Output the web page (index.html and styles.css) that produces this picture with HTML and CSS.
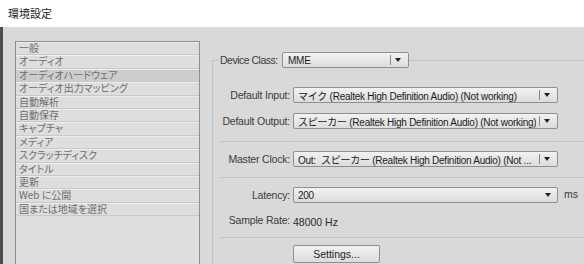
FILE: index.html
```html
<!DOCTYPE html>
<html lang="ja">
<head>
<meta charset="utf-8">
<link rel="stylesheet" href="styles.css">
</head>
<body>
<div class="titlebar">環境設定</div>
<div class="main">
  <ul class="list">
    <li class="item">一般</li>
    <li class="item">オーディオ</li>
    <li class="item selected">オーディオハードウェア</li>
    <li class="item">オーディオ出力マッピング</li>
    <li class="item">自動解析</li>
    <li class="item">自動保存</li>
    <li class="item">キャプチャ</li>
    <li class="item">メディア</li>
    <li class="item">スクラッチディスク</li>
    <li class="item">タイトル</li>
    <li class="item">更新</li>
    <li class="item">Web に公開</li>
    <li class="item">国または地域を選択</li>
  </ul>
  <fieldset class="panel">
    <legend class="legend">
      <span class="label legend-label">Device Class:</span>
      <span class="select select-short"><span class="select-text">MME</span><span class="divider"></span><span class="arrow"></span></span>
    </legend>
    <div class="row row-input">
      <span class="label">Default Input:</span>
      <span class="select"><span class="select-text">マイク (Realtek High Definition Audio) (Not working)</span><span class="divider"></span><span class="arrow"></span></span>
    </div>
    <div class="row row-output">
      <span class="label">Default Output:</span>
      <span class="select"><span class="select-text">スピーカー (Realtek High Definition Audio) (Not working)</span><span class="divider"></span><span class="arrow"></span></span>
    </div>
    <div class="sep sep-1"></div>
    <div class="row row-clock">
      <span class="label">Master Clock:</span>
      <span class="select"><span class="select-text">Out:&nbsp; スピーカー (Realtek High Definition Audio) (Not ...</span><span class="divider"></span><span class="arrow"></span></span>
    </div>
    <div class="sep sep-2"></div>
    <div class="row row-latency">
      <span class="label">Latency:</span>
      <span class="select"><span class="select-text">200</span><span class="arrow"></span></span>
      <span class="unit">ms</span>
    </div>
    <div class="row row-rate">
      <span class="label">Sample Rate:</span>
      <span class="value">48000 Hz</span>
    </div>
    <div class="sep sep-3"></div>
    <div class="row row-button">
      <span class="label"></span>
      <span class="button">Settings...</span>
    </div>
  </fieldset>
</div>
</body>
</html>
```

FILE: styles.css
```css
* { box-sizing: border-box; }
html, body {
  margin: 0;
  padding: 0;
  width: 584px;
  height: 264px;
  overflow: hidden;
  background: #d9d9d9;
}
body {
  font-family: "Liberation Sans", "Noto Sans CJK JP", sans-serif;
}
.titlebar {
  height: 27px;
  background: #ffffff;
  padding-left: 8px;
  font-family: "Noto Sans CJK JP", sans-serif;
  font-size: 11px;
  line-height: 27px;
  color: #1a1a1a;
}
.main {
  display: flex;
  height: 237px;
  overflow: hidden;
  background: #d9d9d9;
  border-left: 3px solid #4d4d4d;
}
.list {
  list-style: none;
  margin: 14px 0 0 12px;
  padding: 0;
  width: 185px;
  height: 240px;
  border: 1px solid #8e8e8e;
  border-bottom: none;
  background: #dedede;
  flex: none;
}
.item {
  height: 13.4px;
  line-height: 12px;
  padding-left: 3px;
  font-family: "Noto Sans CJK JP", sans-serif;
  font-feature-settings: "palt";
  font-size: 10px;
  color: #6e6e6e;
  border-bottom: 1px solid #c9c9c9;
  box-shadow: inset 0 1px 0 #ededed;
  background: #dedede;
  white-space: nowrap;
}
.item.selected {
  background: #cdcdcd;
}
.panel {
  flex: none;
  width: 374px;
  margin: 25px 0 0 12px;
  padding: 0 0 0 6px;
  border: none;
  border-top: 1px solid #c2c2c2;
  border-left: 1px solid #c2c2c2;
  min-width: 0;
}
.legend {
  padding: 0;
  margin-left: 0;
  display: flex;
  align-items: center;
  height: 16px;
}
.label {
  font-size: 10.5px;
  color: #3c3c3c;
  letter-spacing: -0.2px;
  white-space: nowrap;
}
.legend-label {
  padding-left: 1px;
  width: 63px;
  letter-spacing: -0.5px;
}
.select {
  display: flex;
  align-items: center;
  width: 265px;
  height: 16px;
  border: 1px solid #8f8f8f;
  border-radius: 2px;
  background: linear-gradient(#f2f2f2, #dcdcdc);
  padding-left: 4px;
  font-size: 10px;
  color: #1c1c1c;
  flex: none;
}
.select-short {
  width: 127px;
  padding-left: 5px;
}
.select-text {
  flex: 1;
  white-space: nowrap;
  overflow: hidden;
  letter-spacing: -0.25px;
}
.divider {
  width: 1px;
  height: 10px;
  background: #8a8a8a;
  margin: 0 4px 0 3px;
  flex: none;
}
.arrow {
  flex: none;
  width: 0;
  height: 0;
  border-left: 3px solid transparent;
  border-right: 3px solid transparent;
  border-top: 4px solid #222;
  margin-right: 7px;
}
.row-latency .arrow { margin-right: 6px; }
.row {
  display: flex;
  align-items: center;
  height: 16px;
}
.row .label {
  width: 74px;
  text-align: right;
  padding-right: 3px;
  flex: none;
}
.row-input { margin-top: 19px; }
.row-output { margin-top: 10px; }
.sep {
  height: 1px;
  background: #c2c2c2;
  margin-left: 1px;
}
.sep-1 { margin-top: 12px; }
.row-clock { margin-top: 9px; }
.sep-2 { margin-top: 10px; }
.row-latency { margin-top: 9px; }
.unit {
  font-size: 10.5px;
  color: #3c3c3c;
  margin-left: 6px;
  margin-top: -3px;
}
.row-rate {
  margin-top: 9px;
  height: 16px;
}
.value {
  font-size: 10.5px;
  color: #2a2a2a;
  margin-top: 3px;
}
.sep-3 { margin-top: 9px; }
.row-button {
  margin-top: 7px;
  height: 18px;
}
.button {
  width: 87px;
  height: 18px;
  border: 1px solid #8f8f8f;
  border-radius: 2px;
  background: linear-gradient(#f2f2f2, #dcdcdc);
  font-size: 10.5px;
  color: #1c1c1c;
  text-align: center;
  line-height: 16px;
}
```
